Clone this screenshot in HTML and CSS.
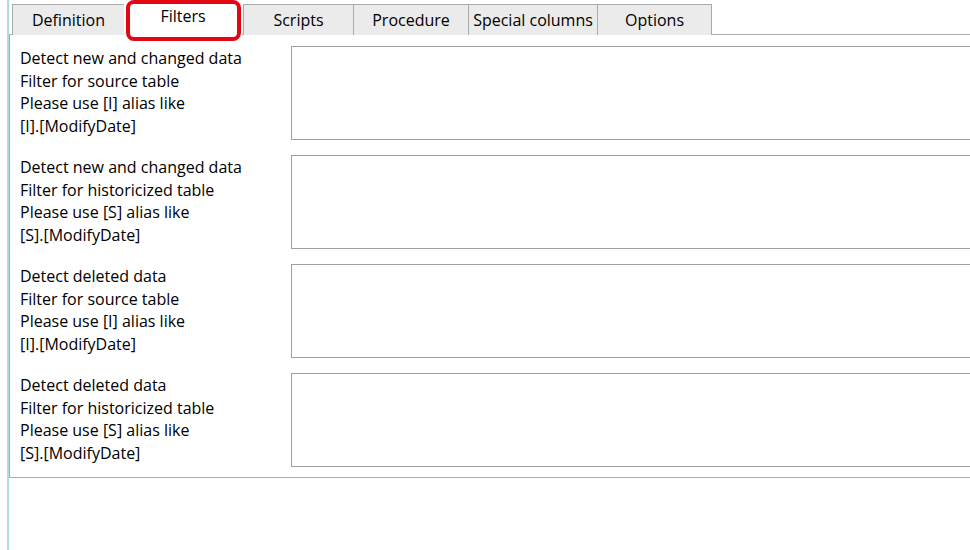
FILE: index.html
```html
<!DOCTYPE html>
<html lang="en">
<head>
    <meta charset="UTF-8">
    <title>Filters</title>
    <link rel="stylesheet" href="styles.css">
</head>
<body>
    <div class="frame">
        <div class="tabs">
            <div class="tab">Definition</div>
            <div class="tab active">Filters</div>
            <div class="tab">Scripts</div>
            <div class="tab">Procedure</div>
            <div class="tab">Special columns</div>
            <div class="tab">Options</div>
        </div>
        <div class="panel">
            <div class="row">
                <div class="label">Detect new and changed data<br>Filter for source table<br>Please use [I] alias like<br>[I].[ModifyDate]</div>
                <textarea class="box"></textarea>
            </div>
            <div class="row">
                <div class="label">Detect new and changed data<br>Filter for historicized table<br>Please use [S] alias like<br>[S].[ModifyDate]</div>
                <textarea class="box"></textarea>
            </div>
            <div class="row">
                <div class="label">Detect deleted data<br>Filter for source table<br>Please use [I] alias like<br>[I].[ModifyDate]</div>
                <textarea class="box"></textarea>
            </div>
            <div class="row">
                <div class="label">Detect deleted data<br>Filter for historicized table<br>Please use [S] alias like<br>[S].[ModifyDate]</div>
                <textarea class="box"></textarea>
            </div>
        </div>
    </div>
</body>
</html>
```

FILE: styles.css
```css
body {
    margin: 0;
    padding: 0;
    background: #fff;
    font-family: "Open Sans", "Noto Sans", sans-serif;
    font-size: 16px;
    color: #000;
    overflow: hidden;
    height: 550px;
}
.frame {
    margin-left: 7px;
    border-left: 2px solid #a9dcea;
    height: 550px;
}
.tabs {
    display: flex;
    padding-left: 3px;
    padding-top: 4px;
    height: 30px;
}
.tab {
    box-sizing: border-box;
    height: 31px;
    background: #ebebeb;
    border: 1px solid #acacac;
    border-bottom: none;
    margin-right: -1px;
    display: flex;
    align-items: center;
    justify-content: center;
    line-height: 1;
    position: relative;
    white-space: nowrap;
}
.tab:nth-child(1) { width: 113px; }
.tab:nth-child(2) { width: 118px; }
.tab:nth-child(3) { width: 111px; margin-left: 2px; }
.tab:nth-child(4) { width: 116px; }
.tab:nth-child(5) { width: 130px; }
.tab:nth-child(6) { width: 115px; }
.tab.active {
    background: #fff;
    margin-top: -4px;
    height: 36px;
    padding-bottom: 6px;
    border-color: #fff;
    z-index: 1;
}
.tab.active::after {
    content: "";
    position: absolute;
    left: 1px;
    top: -1px;
    right: 0;
    bottom: -5px;
    border: 4px solid #e30613;
    border-radius: 8px;
}
.panel {
    border-top: 1px solid #acacac;
    border-left: 1px solid #acacac;
    border-bottom: 1px solid #acacac;
    padding: 11px 0 10px 10px;
    display: flex;
    flex-direction: column;
    gap: 15px;
}
.row {
    display: flex;
    height: 94px;
}
.label {
    width: 271px;
    flex: none;
    line-height: 22.7px;
    padding-top: 1px;
}
.box {
    flex: 1;
    height: 94px;
    box-sizing: border-box;
    border: 1px solid #a0a0a0;
    border-right: none;
    resize: none;
    margin: 0;
    padding: 0;
    font: inherit;
}
```
